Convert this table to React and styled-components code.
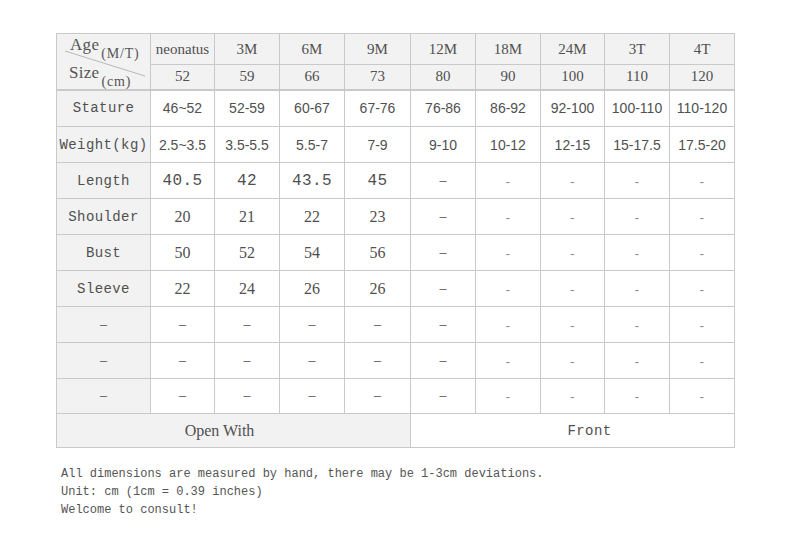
import React from "react";
import styled, { createGlobalStyle, css } from "styled-components";

const GlobalStyle = createGlobalStyle`
  html, body {
    margin: 0;
    padding: 0;
    background: #ffffff;
  }
`;

const fonts = {
  serif: `"Liberation Serif", "DejaVu Serif", serif`,
  sans: `"Liberation Sans", "Noto Sans", sans-serif`,
  mono: `"Liberation Mono", "DejaVu Sans Mono", monospace`,
};

const Page = styled.div`
  padding: 33px 0 0 56px;
  width: 734px;
`;

const SizeTable = styled.table`
  border-collapse: collapse;
  table-layout: fixed;
  width: 679px;
  color: #505050;
`;

const Cell = styled.td`
  border: 1px solid #c9c9c9;
  padding: 0;
  text-align: center;
  vertical-align: middle;
  white-space: nowrap;
  background: ${(p) => (p.$shade ? "#f2f2f2" : "#ffffff")};
  font-family: ${(p) => fonts[p.$font || "serif"]};
  font-size: ${(p) => p.$size || 14}px;
  ${(p) =>
    p.$font === "mono" &&
    css`
      letter-spacing: 0.4px;
    `}
  ${(p) =>
    p.$light &&
    css`
      color: #8a8a8a;
      padding-top: 4px;
    `}
  ${(p) =>
    p.$shift &&
    css`
      padding-left: ${p.$shift > 0 ? p.$shift : 0}px;
      padding-right: ${p.$shift < 0 ? -p.$shift : 0}px;
    `}
`;

const HeadRow = styled.tr`
  height: ${(p) => p.$h}px;
  ${(p) =>
    p.$thick &&
    css`
      & > td {
        border-bottom: 2px solid #c9c9c9;
      }
    `}
`;

const BodyRow = styled.tr`
  height: ${(p) => p.$h || 36}px;
`;

const CornerCell = styled.td`
  position: relative;
  border: 1px solid #c9c9c9;
  border-bottom: 2px solid #c9c9c9;
  background: #f2f2f2;
  padding: 0;
  font-family: ${fonts.serif};
  color: #555;
`;

const CornerLine = styled.svg`
  position: absolute;
  left: 0;
  top: 0;
`;

const CornerLabel = styled.div`
  position: absolute;
  left: ${(p) => p.$x}px;
  top: ${(p) => p.$y}px;
  font-size: 17px;
  line-height: 1;
  white-space: nowrap;
  letter-spacing: 0.3px;
`;

const Sub = styled.span`
  font-size: 14px;
  position: relative;
  top: 8px;
  margin-left: 2px;
  letter-spacing: 0.8px;
`;

const Notes = styled.div`
  margin: 17px 0 0 5px;
  font-family: ${fonts.mono};
  font-size: 12px;
  line-height: 18px;
  color: #555;
`;

const widths = [94, 64, 65, 65, 66, 65, 65, 64, 65, 65];
const ages = ["neonatus", "3M", "6M", "9M", "12M", "18M", "24M", "3T", "4T"];
const sizes = ["52", "59", "66", "73", "80", "90", "100", "110", "120"];

const rows = [
  { label: "Stature", font: "sans", vals: ["46~52", "52-59", "60-67", "67-76", "76-86", "86-92", "92-100", "100-110", "110-120"], h: 37 },
  { label: "Weight(kg)", font: "sans", vals: ["2.5~3.5", "3.5-5.5", "5.5-7", "7-9", "9-10", "10-12", "12-15", "15-17.5", "17.5-20"] },
  { label: "Length", font: "mono", vals: ["40.5", "42", "43.5", "45"] },
  { label: "Shoulder", font: "serif", vals: ["20", "21", "22", "23"] },
  { label: "Bust", font: "serif", vals: ["50", "52", "54", "56"] },
  { label: "Sleeve", font: "serif", vals: ["22", "24", "26", "26"] },
  { label: "–", font: "serif", vals: ["–", "–", "–", "–"], dash: true },
  { label: "–", font: "serif", vals: ["–", "–", "–", "–"], dash: true },
  { label: "–", font: "serif", vals: ["–", "–", "–", "–"], dash: true, h: 35 },
];

const sizeFor = (font, dash) => {
  if (dash) return 14;
  if (font === "mono") return 16;
  if (font === "serif") return 16;
  return 14;
};

const renderValues = (row) => {
  const cells = [];
  for (let i = 0; i < 9; i++) {
    if (i < row.vals.length) {
      cells.push(
        <Cell key={i} $font={row.font} $size={sizeFor(row.font, row.dash)}>
          {row.vals[i]}
        </Cell>
      );
    } else if (i === 4) {
      cells.push(
        <Cell key={i} $font="serif">
          –
        </Cell>
      );
    } else {
      cells.push(
        <Cell key={i} $font="mono" $size={12} $light>
          -
        </Cell>
      );
    }
  }
  return cells;
};

export default function App() {
  return (
    <Page>
      <GlobalStyle />
      <SizeTable>
        <colgroup>
          {widths.map((w, i) => (
            <col key={i} style={{ width: w }} />
          ))}
        </colgroup>
        <tbody>
          <HeadRow $h={31}>
            <CornerCell rowSpan={2}>
              <CornerLine width="94" height="56">
                <line x1="8" y1="17" x2="88" y2="42" stroke="#b8b8b8" strokeWidth="1" />
              </CornerLine>
              <CornerLabel $x={13} $y={2}>
                Age<Sub>(M/T)</Sub>
              </CornerLabel>
              <CornerLabel $x={12} $y={30}>
                Size<Sub>(cm)</Sub>
              </CornerLabel>
            </CornerCell>
            {ages.map((a) => (
              <Cell key={a} $shade $font="serif" $size={15}>
                {a}
              </Cell>
            ))}
          </HeadRow>
          <HeadRow $h={25} $thick>
            {sizes.map((s) => (
              <Cell key={s} $shade $font="serif" $size={15}>
                {s}
              </Cell>
            ))}
          </HeadRow>
          {rows.map((row, idx) => (
            <BodyRow key={idx} $h={row.h}>
              <Cell $shade $font={row.dash ? "serif" : "mono"} $size={14}>
                {row.label}
              </Cell>
              {renderValues(row)}
            </BodyRow>
          ))}
          <BodyRow $h={34}>
            <Cell colSpan={5} $shade $font="serif" $size={16} $shift={-28}>
              Open With
            </Cell>
            <Cell colSpan={5} $font="mono" $size={14} $shift={34}>
              Front
            </Cell>
          </BodyRow>
        </tbody>
      </SizeTable>
      <Notes>
        <div>All dimensions are measured by hand, there may be 1-3cm deviations.</div>
        <div>Unit: cm (1cm = 0.39 inches)</div>
        <div>Welcome to consult!</div>
      </Notes>
    </Page>
  );
}
